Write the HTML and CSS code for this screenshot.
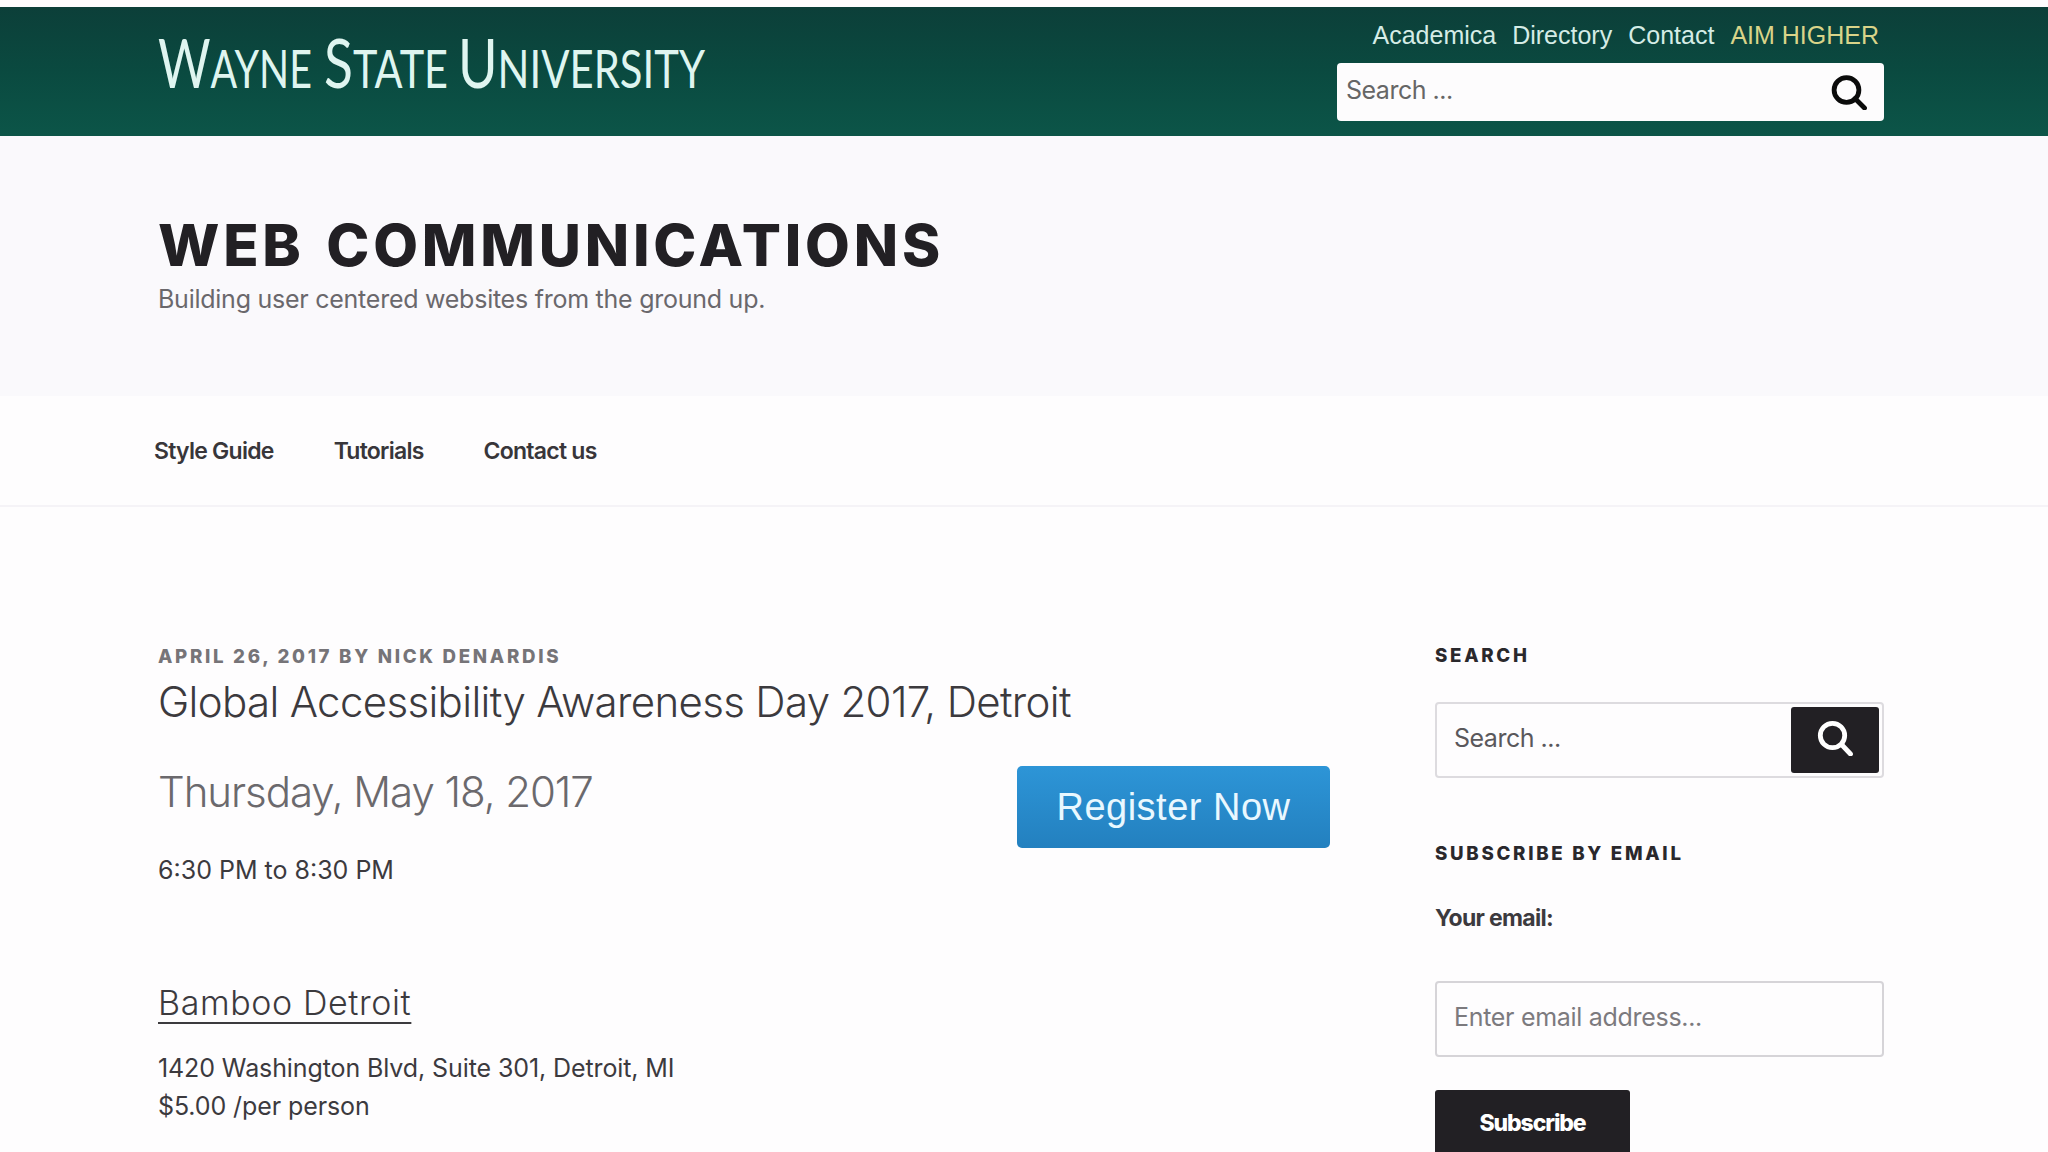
FILE: index.html
```
<!DOCTYPE html>
<html lang="en">
<head>
  <meta charset="UTF-8">
  <meta name="viewport" content="width=device-width, initial-scale=1.0">
  <title>Global Accessibility Awareness Day 2017, Detroit - Web Communications</title>
  <link rel="stylesheet" href="styles.css">
</head>
<body>

  <!-- University header -->
  <header class="wsu-header">
    <a href="#" class="wsu-logo">
      <svg width="570" height="100" viewBox="0 0 570 100" role="img" aria-label="Wayne State University">
        <text x="0" y="67" textLength="154" lengthAdjust="spacingAndGlyphs"><tspan class="cap">W</tspan>AYNE</text>
        <text x="166" y="67" textLength="124" lengthAdjust="spacingAndGlyphs"><tspan class="cap">S</tspan>TATE</text>
        <text x="300" y="67" textLength="247" lengthAdjust="spacingAndGlyphs"><tspan class="cap">U</tspan>NIVERSITY</text>
      </svg>
    </a>
    <div class="wsu-tools">
      <nav class="wsu-links">
        <a href="#">Academica</a>
        <a href="#">Directory</a>
        <a href="#">Contact</a>
        <a href="#" class="aim-higher">AIM HIGHER</a>
      </nav>
      <form class="wsu-search">
        <input type="text" placeholder="Search ..." aria-label="Search">
        <svg width="36" height="35" viewBox="0 0 36 35">
          <circle cx="15.5" cy="15" r="12.4"/>
          <path d="M24 23.5 33.5 33"/>
        </svg>
      </form>
    </div>
  </header>

  <!-- Site title -->
  <div class="branding">
    <h1 class="site-title">WEB COMMUNICATIONS</h1>
    <p class="site-description">Building user centered websites from the ground up.</p>
  </div>

  <nav class="main-nav">
    <a href="#">Style Guide</a>
    <a href="#">Tutorials</a>
    <a href="#">Contact us</a>
  </nav>

  <div class="content">
    <main class="post">
      <div class="entry-meta">APRIL 26, 2017 BY NICK DENARDIS</div>
      <h2 class="entry-title">Global Accessibility Awareness Day 2017, Detroit</h2>

      <div class="event">
        <div class="event-when">
          <h3 class="event-date">Thursday, May 18, 2017</h3>
          <p class="event-time">6:30 PM to 8:30 PM</p>
        </div>
        <a href="#" class="register">Register Now</a>
      </div>

      <h4 class="venue"><a href="#">Bamboo Detroit</a></h4>
      <p class="address">1420 Washington Blvd, Suite 301, Detroit, MI<br>$5.00 /per person</p>
    </main>

    <aside class="sidebar">
      <h2 class="widget-title">SEARCH</h2>
      <form class="search-form">
        <input type="text" placeholder="Search ..." aria-label="Search">
        <button type="button" aria-label="Search">
          <svg width="36" height="36" viewBox="0 0 36 36">
            <circle cx="15.5" cy="15.5" r="12.2"/>
            <path d="M24.5 24.5 33.5 34"/>
          </svg>
        </button>
      </form>

      <h2 class="widget-title">SUBSCRIBE BY EMAIL</h2>
      <form class="subscribe-form">
        <label for="email">Your email:</label>
        <input type="text" id="email" placeholder="Enter email address...">
        <button type="button">Subscribe</button>
      </form>
    </aside>
  </div>

</body>
</html>
```
FILE: styles.css
```
* {
  box-sizing: border-box;
}

body {
  margin: 0;
  padding-top: 7px;
  height: 1152px;
  overflow: hidden;
  background-color: #fefdfe;
  color: #3c3a3e;
  font-family: Inter, "Liberation Sans", sans-serif;
  font-size: 25px;
}

h1, h2, h3, h4, p {
  margin: 0;
}

a {
  color: inherit;
  text-decoration: none;
}

input, button {
  font-family: inherit;
  font-size: 25px;
}

/* University header */
.wsu-header {
  display: flex;
  justify-content: space-between;
  height: 129px;
  padding: 14px 164px 0 158px;
  background: linear-gradient(#0c3f39, #0a4a40 50%, #0c5548);
}

.wsu-logo svg {
  display: block;
}

.wsu-logo text {
  fill: #dff5f0;
  font-family: Lato, sans-serif;
  font-size: 52px;
}

.wsu-logo .cap {
  font-size: 67px;
}

.wsu-tools {
  width: 547px;
}

.wsu-links {
  display: flex;
  justify-content: flex-end;
  gap: 16px;
  height: 42px;
  padding-right: 5px;
  color: #d5ece6;
  font-family: "Liberation Sans", Arial, sans-serif;
  line-height: 29px;
}

.wsu-links .aim-higher {
  color: #d9d489;
}

.wsu-search {
  display: flex;
  align-items: center;
  height: 58px;
  padding: 1px 17px 0 9px;
  background-color: #fdfcfd;
  border-radius: 4px;
}

.wsu-search input {
  flex: 1;
  min-width: 0;
  height: 30px;
  margin-bottom: 6px;
  padding: 0;
  background: none;
  border: none;
  letter-spacing: -0.5px;
}

.wsu-search input::placeholder {
  color: #666;
  opacity: 1;
}

.wsu-search svg,
.search-form svg {
  fill: none;
  stroke: #0b0b0b;
  stroke-width: 4.8;
  stroke-linecap: round;
}

/* Site title */
.branding {
  height: 260px;
  padding: 74px 158px 0;
  background-color: #faf9fc;
}

.site-title {
  color: #222024;
  font-size: 58px;
  font-weight: 800;
  line-height: 70px;
  letter-spacing: 3.8px;
  word-spacing: 5px;
}

.site-description {
  margin-top: 4px;
  color: #6a686c;
  line-height: 30px;
  letter-spacing: -0.25px;
}

.main-nav {
  display: flex;
  gap: 60px;
  height: 111px;
  padding: 40px 154px 0;
  border-bottom: 2px solid #f5f3f7;
  color: #38363a;
  font-size: 23px;
  font-weight: 600;
  line-height: 30px;
  letter-spacing: -0.75px;
}

.content {
  display: flex;
  justify-content: space-between;
  padding: 137px 164px 0 158px;
}

/* Post */
.post {
  width: 1172px;
  padding-top: 1px;
}

.entry-meta {
  color: #767478;
  font-size: 18.7px;
  font-weight: 800;
  line-height: 24px;
  letter-spacing: 2.69px;
}

.entry-title {
  margin: 8px 0 39px 0;
  font-size: 42px;
  font-weight: 350;
  line-height: 50px;
  letter-spacing: -0.66px;
}

.event {
  display: flex;
  justify-content: space-between;
  align-items: flex-start;
}

.event-date {
  margin: 1px 0 34px 0;
  color: #6b696d;
  font-size: 42px;
  font-weight: 350;
  line-height: 50px;
  letter-spacing: -1.05px;
}

.event-time,
.address {
  line-height: 38px;
}

.address {
  letter-spacing: -0.1px;
}

.register {
  width: 313px;
  height: 82px;
  background: linear-gradient(#2d95d7, #2380bf);
  border-radius: 5px;
  color: #e9f8ff;
  font-family: "Liberation Sans", Arial, sans-serif;
  font-size: 38px;
  line-height: 82px;
  letter-spacing: 0.5px;
  text-align: center;
}

.venue {
  margin: 92px 0 24px;
  font-size: 34px;
  font-weight: 350;
  line-height: 44px;
  letter-spacing: 0.6px;
}

.venue a {
  text-decoration: underline;
  text-decoration-thickness: 2px;
  text-underline-offset: 7px;
}

/* Sidebar */
.sidebar {
  width: 449px;
}

.widget-title {
  color: #2a282c;
  font-size: 18.7px;
  font-weight: 800;
  line-height: 24px;
  letter-spacing: 2.7px;
}

.search-form {
  display: flex;
  height: 76px;
  margin: 34px 0 64px;
  padding: 3px;
  border: 2px solid #dddbdf;
  border-radius: 4px;
}

.search-form input {
  flex: 1;
  min-width: 0;
  padding: 0 14px 4px;
  background: none;
  border: none;
  letter-spacing: -0.5px;
}

.search-form input::placeholder {
  color: #5a585c;
  opacity: 1;
}

.search-form button {
  width: 88px;
  padding: 0 0 4px;
  background-color: #222024;
  border: none;
  border-radius: 3px;
}

.search-form svg {
  display: block;
  margin: 0 auto;
  stroke: #fff;
}

.subscribe-form label {
  display: block;
  margin-top: 37px;
  font-size: 23px;
  font-weight: 700;
  line-height: 30px;
  letter-spacing: -0.7px;
}

.subscribe-form input {
  display: block;
  width: 100%;
  height: 76px;
  margin: 48px 0 33px;
  padding: 0 17px 4px;
  background: none;
  border: 2px solid #d6d4d8;
  border-radius: 4px;
  letter-spacing: -0.3px;
}

.subscribe-form input::placeholder {
  color: #7c7a7e;
  opacity: 1;
}

.subscribe-form button {
  width: 195px;
  height: 76px;
  padding: 0 0 10px;
  background-color: #222024;
  border: none;
  border-radius: 3px;
  color: #fff;
  font-size: 23px;
  font-weight: 800;
  letter-spacing: -1.1px;
}
```
